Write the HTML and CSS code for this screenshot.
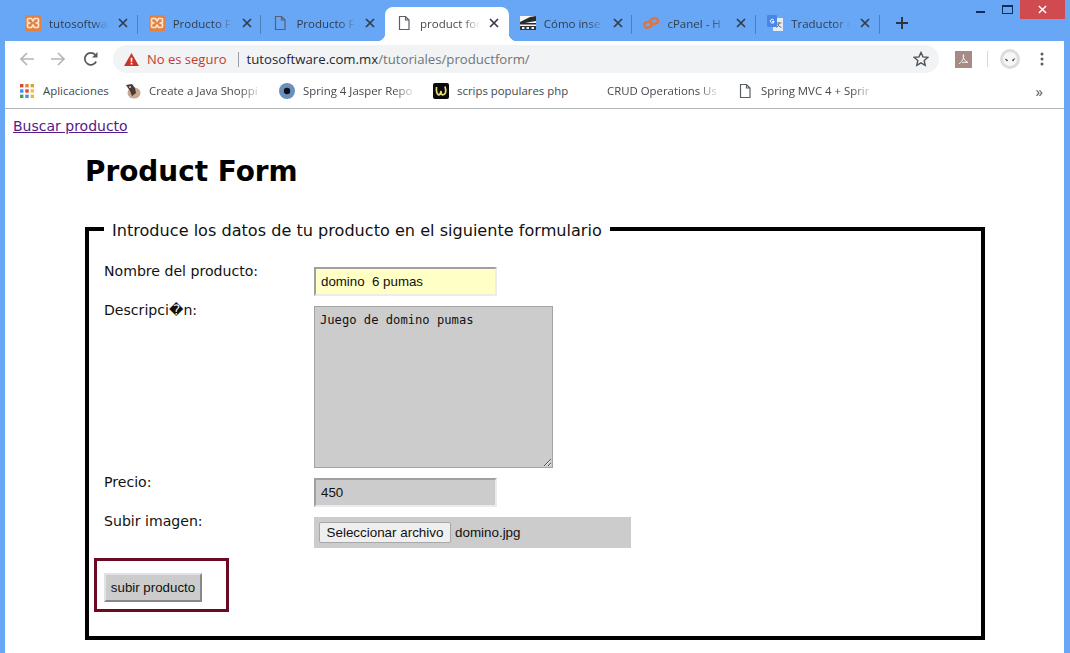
FILE: index.html
```html
<!DOCTYPE html>
<html lang="es">
<head>
<meta charset="utf-8">
<title>product form</title>
<link rel="stylesheet" href="styles.css">
</head>
<body>
<svg class="defs" width="0" height="0">
  <symbol id="xampp" viewBox="0 0 16 16">
    <rect width="16" height="16" rx="1.5" fill="#e5813f"/>
    <path d="M3.500 3.500h3L8 6l1.500-2.500h3q1 0 1 1V7L11.500 8l2 1v2.500q0 1-1 1h-3L8 10l-1.500 2.500h-3q-1 0-1-1V9l2-1-2-1V4.500q0-1 1-1z" fill="none" stroke="#fbe6d4" stroke-width="1.600"/>
  </symbol>
  <symbol id="doc" viewBox="0 0 16 16">
    <path d="M3.500 1.500h6l3.500 3.500v9.500h-9.500z M9.500 1.500v3.500h3.500" fill="none" stroke="#5a6068" stroke-width="1.200"/>
  </symbol>
  <symbol id="close" viewBox="0 0 10 10">
    <path d="M1 1l8 8M9 1l-8 8" stroke="#333c48" stroke-width="1.700" fill="none"/>
  </symbol>
</svg>

<header class="tabstrip">
  <div class="tab sep"><svg class="fav"><use href="#xampp"/></svg><span class="tab-title">tutosoftwar</span><svg class="x"><use href="#close"/></svg></div>
  <div class="tab sep"><svg class="fav"><use href="#xampp"/></svg><span class="tab-title">Producto F</span><svg class="x"><use href="#close"/></svg></div>
  <div class="tab"><svg class="fav"><use href="#doc"/></svg><span class="tab-title">Producto F</span><svg class="x"><use href="#close"/></svg></div>
  <div class="tab active"><svg class="fav"><use href="#doc"/></svg><span class="tab-title">product for</span><svg class="x"><use href="#close"/></svg></div>
  <div class="tab sep"><svg class="fav" viewBox="0 0 16 16"><rect y="1" width="16" height="14" fill="#f4f6f8"/><path d="M0 7l6-3 4-2 6-1v5l-6 1-10 2z" fill="#2a2a2a"/><rect y="8" width="16" height="1.500" fill="#2a2a2a"/><path d="M0 11h16v4H0z" fill="#333"/><path d="M2 12h2.500v2H2zM6.500 12H9v2H6.500zM11.500 12H14v2h-2.500z" fill="#eee"/></svg><span class="tab-title">Cómo inse</span><svg class="x"><use href="#close"/></svg></div>
  <div class="tab sep"><svg class="fav" viewBox="0 0 16 16"><g fill="none" stroke="#e4703c" stroke-width="2.400"><rect x="1.400" y="7" width="7.500" height="5.400" rx="2.700" transform="rotate(-18 5 10)"/><rect x="7.400" y="3.400" width="7.500" height="5.400" rx="2.700" transform="rotate(-18 11 6)"/></g></svg><span class="tab-title">cPanel - H</span><svg class="x"><use href="#close"/></svg></div>
  <div class="tab sep"><svg class="fav" viewBox="0 0 16 16"><rect x="6" y="3" width="10" height="13" fill="#e4ecf8"/><rect width="10" height="12" rx="1" fill="#4a86e8"/><path d="M6.800 5a1.900 1.900 0 1 0 .4 1.600H5" fill="none" stroke="#fff" stroke-width="1"/><path d="M9.500 8h5M12 7v1.500q0 3-3 4M10.500 9q1 2.500 4 3.500" fill="none" stroke="#667" stroke-width=".9"/></svg><span class="tab-title">Traductor c</span><svg class="x"><use href="#close"/></svg></div>
  <svg class="plus" viewBox="0 0 12 12"><path d="M6 0v12M0 6h12" stroke="#2c3440" stroke-width="1.900" fill="none"/></svg>
  <div class="winctl">
    <span class="win-min"></span>
    <span class="win-max"></span>
    <span class="win-close"><svg class="win-x" viewBox="0 0 10 10"><path d="M1 1l8 8M9 1l-8 8" stroke="#fff" stroke-width="1.600" fill="none"/></svg></span>
  </div>
</header>

<div class="window">
  <nav class="toolbar">
    <svg class="tool tool-back" viewBox="0 0 16 16"><path d="M15 8H2M8 2L2 8l6 6" fill="none" stroke="#b3b6ba" stroke-width="1.700"/></svg>
    <svg class="tool tool-fwd" viewBox="0 0 16 16"><path d="M1 8h13M8 2l6 6-6 6" fill="none" stroke="#b3b6ba" stroke-width="1.700"/></svg>
    <svg class="tool tool-reload" viewBox="0 0 16 16"><path d="M13.200 10.500A6 6 0 1 1 12.300 3.800" fill="none" stroke="#55595e" stroke-width="1.700"/><path d="M14.500 1v5.500H9z" fill="#55595e"/></svg>
    <div class="omnibox">
      <svg class="warn" viewBox="0 0 16 14"><path d="M8 0l8 14H0z" fill="#c9342a"/><path d="M7.100 5h1.800v4.500H7.100zM7.100 10.500h1.800v1.800H7.100z" fill="#fff"/></svg>
      <span class="insecure">No es seguro</span>
      <span class="omni-sep"></span>
      <span class="url">tutosoftware.com.mx<span class="url-path">/tutoriales/productform/</span></span>
      <svg class="star" viewBox="0 0 16 16"><path d="M8 1.500l2 4.400 4.800.5-3.600 3.200 1 4.700L8 11.900l-4.200 2.400 1-4.700L1.200 6.400 6 5.900z" fill="none" stroke="#4d5257" stroke-width="1.400"/></svg>
    </div>
    <svg class="ext-pdf" viewBox="0 0 17 17"><rect width="17" height="17" fill="#a58a86"/><path d="M4 13q3-2 4.500-6 .5-2.500 0-3.500-1 1 0 3.500 1 3 4.500 4.500-3-.5-6 0" fill="none" stroke="#f4ecea" stroke-width="1"/></svg>
    <span class="tool-sep"></span>
    <svg class="avatar" viewBox="0 0 20 20"><circle cx="10" cy="10" r="10" fill="#dcdcdc"/><circle cx="10" cy="10" r="7" fill="#f7f7f7"/><path d="M4.500 9.500l3.500 1.500-1 1.500zM15.500 9l-3.500 2 1 1.500z" fill="#333"/></svg>
    <svg class="dots" viewBox="0 0 4 14"><circle cx="2" cy="2" r="1.500" fill="#5a5e63"/><circle cx="2" cy="7" r="1.500" fill="#5a5e63"/><circle cx="2" cy="12" r="1.500" fill="#5a5e63"/></svg>
  </nav>

  <div class="bookmarks">
    <div class="bm bm-apps">
      <svg class="apps" viewBox="0 0 14 14">
        <rect x="0" y="0" width="3.400" height="3.400" fill="#d8483b"/><rect x="5.300" y="0" width="3.400" height="3.400" fill="#e0862e"/><rect x="10.600" y="0" width="3.400" height="3.400" fill="#d8a22b"/>
        <rect x="0" y="5.300" width="3.400" height="3.400" fill="#4c8bea"/><rect x="5.300" y="5.300" width="3.400" height="3.400" fill="#d8483b"/><rect x="10.600" y="5.300" width="3.400" height="3.400" fill="#f0c33c"/>
        <rect x="0" y="10.600" width="3.400" height="3.400" fill="#3e9e55"/><rect x="5.300" y="10.600" width="3.400" height="3.400" fill="#4c8bea"/><rect x="10.600" y="10.600" width="3.400" height="3.400" fill="#e6b93a"/>
      </svg>
      <span class="bm-text">Aplicaciones</span>
    </div>
    <div class="bm bm-java">
      <svg class="bm-ico" viewBox="0 0 16 16"><ellipse cx="9" cy="10" rx="6.500" ry="5.500" fill="#c8a890"/><path d="M1 2l6-1 3 4 1 5-4 3-2-5z" fill="#4a3a34"/><circle cx="5" cy="4" r="1" fill="#ddd"/></svg>
      <span class="bm-text bm-fade">Create a Java Shoppi</span>
    </div>
    <div class="bm bm-spring">
      <svg class="bm-ico" viewBox="0 0 16 16"><circle cx="8" cy="8" r="8" fill="#6b8fbc"/><circle cx="8" cy="8" r="3.200" fill="#0c1018"/></svg>
      <span class="bm-text bm-fade">Spring 4 Jasper Repo</span>
    </div>
    <div class="bm bm-scrips">
      <svg class="bm-ico" viewBox="0 0 16 16"><rect width="16" height="16" rx="2" fill="#0a0a0a"/><path d="M3.500 4q-.5 6 1.500 7.500T8 8q0 5 3 3.500t1-8" fill="none" stroke="#e6dc7c" stroke-width="1.700"/></svg>
      <span class="bm-text">scrips populares php</span>
    </div>
    <div class="bm bm-crud"><span class="bm-text bm-fade">CRUD Operations Us</span></div>
    <div class="bm bm-mvc">
      <svg class="bm-ico" viewBox="0 0 16 16"><use href="#doc"/></svg>
      <span class="bm-text bm-fade">Spring MVC 4 + Sprir</span>
    </div>
    <span class="more">»</span>
  </div>

  <main class="page">
    <a class="back-link" href="#">Buscar producto</a>
    <div class="content">
      <h1 class="title">Product Form</h1>
      <form>
        <fieldset class="box">
          <legend class="box-legend">Introduce los datos de tu producto en el siguiente formulario</legend>
          <div class="row">
            <label class="lbl">Nombre del producto:</label>
            <input class="field field-active" type="text" value="domino  6 pumas">
          </div>
          <div class="row">
            <label class="lbl">Descripci�n:</label>
            <textarea class="area">Juego de domino pumas</textarea>
          </div>
          <div class="row">
            <label class="lbl">Precio:</label>
            <input class="field" type="text" value="450">
          </div>
          <div class="row">
            <label class="lbl">Subir imagen:</label>
            <div class="file"><button class="file-btn" type="button">Seleccionar archivo</button><span class="file-name">domino.jpg</span></div>
          </div>
          <div class="submit-box"><button class="submit" type="button">subir producto</button></div>
        </fieldset>
      </form>
    </div>
  </main>
</div>
</body>
</html>
```

FILE: styles.css
```css
* { box-sizing: border-box; }
html, body { margin: 0; height: 100%; overflow: hidden; }
body { background: #68a7f5; font-family: "Open Sans", sans-serif; display: flex; flex-direction: column; }
.defs { position: absolute; }

/* tab strip */
.tabstrip { height: 41px; display: flex; padding-left: 14px; flex: none; }
.tab { width: 123.7px; height: 34px; margin-top: 7px; padding-left: 11px; display: flex; align-items: center; position: relative; font-size: 11.500px; color: #2f3d50; border-radius: 8px 8px 0 0; flex: none; }
.tab.sep::after { content: ""; position: absolute; right: 0; top: 8px; height: 19px; width: 1px; background: #4c7fbe; }
.tab.active { background: #fff; color: #44484e; }
.tab.active::before, .tab.active::after { content: ""; position: absolute; bottom: 0; width: 8px; height: 8px; }
.tab.active::before { left: -8px; background: radial-gradient(circle at 0 0, transparent 8px, #fff 8.500px); }
.tab.active::after { right: -8px; background: radial-gradient(circle at 100% 0, transparent 8px, #fff 8.500px); }
.fav { width: 16px; height: 16px; flex: none; margin-top: -2px; }
.tab-title { width: 60px; margin-left: 8px; white-space: nowrap; margin-top: -2px; -webkit-mask-image: linear-gradient(to right, #000 72%, transparent 100%); mask-image: linear-gradient(to right, #000 72%, transparent 100%); }
.x { width: 10px; height: 10px; margin-left: 9px; flex: none; margin-top: -2px; }
.plus { width: 12px; height: 12px; margin: 17px 0 0 16px; flex: none; }
.winctl { margin-left: auto; display: flex; height: 19px; flex: none; margin-right: 5px; }
.win-min { width: 9px; height: 2px; background: #0f2f55; margin: 11px 0 0 0; }
.win-max { width: 11px; height: 9px; border: 1px solid #0f2f55; border-top-width: 2px; margin: 5px 7px 0 17px; }
.win-close { width: 45px; height: 19px; background: #d04b50; display: flex; align-items: center; justify-content: center; }
.win-x { width: 9px; height: 9px; }

/* window */
.window { flex: 1; min-height: 0; margin: 0 6px 0 5px; background: #fff; display: flex; flex-direction: column; }
.toolbar { height: 36px; display: flex; align-items: center; flex: none; }
.tool { width: 16px; height: 16px; flex: none; }
.tool-back { margin-left: 14px; }
.tool-fwd { margin-left: 15px; }
.tool-reload { margin-left: 17px; }
.omnibox { width: 826px; height: 28px; margin-left: 14px; background: #f1f3f4; border-radius: 14px; display: flex; align-items: center; padding-left: 11px; font-size: 13px; flex: none; }
.warn { width: 15px; height: 13px; flex: none; }
.insecure { color: #c5392f; margin-left: 8px; white-space: nowrap; }
.omni-sep { width: 1px; height: 15px; background: #9a9ea3; margin: 0 8px 0 11px; }
.url { color: #24282d; white-space: nowrap; font-size: 13.200px; }
.url-path { color: #70757a; }
.star { width: 16px; height: 16px; margin-left: auto; margin-right: 10px; flex: none; }
.ext-pdf { width: 17px; height: 17px; margin-left: 16px; flex: none; }
.tool-sep { width: 1px; height: 16px; background: #d5d7da; margin-left: 15px; }
.avatar { width: 20px; height: 20px; margin-left: 12px; flex: none; }
.dots { width: 4px; height: 14px; margin-left: 20px; flex: none; }

/* bookmarks */
.bookmarks { height: 32px; border-bottom: 1px solid #b4b6b8; display: flex; align-items: center; font-size: 11.400px; color: #44484d; flex: none; padding-bottom: 3px; }
.bm { display: flex; align-items: center; white-space: nowrap; flex: none; }
.bm-text { margin-top: -2px; }
.apps { width: 14px; height: 14px; margin-right: 9px; flex: none; }
.bm-ico { width: 16px; height: 16px; margin-right: 8px; flex: none; }
.bm-apps { margin-left: 15px; width: 105px; }
.bm-java { width: 154px; }
.bm-spring { width: 154px; }
.bm-scrips { width: 174px; }
.bm-crud { width: 130px; }
.bm-fade { width: 114px; -webkit-mask-image: linear-gradient(to right, #000 80%, transparent 100%); mask-image: linear-gradient(to right, #000 80%, transparent 100%); }
.more { margin-left: auto; margin-right: 21px; font-size: 15px; line-height: 1; color: #55595e; }

/* page */
.page { flex: 1; min-height: 0; overflow: hidden; padding: 8px 8px 0; font-family: "DejaVu Sans", sans-serif; color: #000; }
.back-link { color: #551a8b; font-size: 14px; line-height: 18px; display: block; }
.content { margin: 0 71px 0 72px; }
.title { font-size: 27.900px; font-weight: bold; line-height: 34px; margin: 20px 0 0; }
.box { border: 4px solid #000; margin: 28px 0 0; padding: 27px 15px 24px; min-width: 0; }
.box-legend { font-size: 16.100px; line-height: 19px; padding: 4px 8px 0; color: #111; }
.row { display: flex; align-items: flex-start; margin-bottom: 10px; }
.lbl { width: 210px; flex: none; font-size: 14.100px; line-height: 17px; margin-top: -4px; color: #111; }
.field { width: 183px; height: 29px; padding: 1px 5px; border: 2px solid; border-color: #a0a0a0 #ececec #ececec #a0a0a0; background: #ccc; font: 13.300px "Liberation Sans", sans-serif; color: #111; margin: 0; outline: none; }
.field-active { background: #ffffc6; }
.area { width: 239px; height: 162px; padding: 6px 5px; border: 1px solid #a4a4a4; background: #ccc; font: 12.150px/14px "DejaVu Sans Mono", monospace; color: #111; margin: 0; display: block; }
.file { width: 317px; height: 31px; background: #ccc; display: flex; align-items: center; padding-left: 5px; font: 13.400px "Liberation Sans", sans-serif; color: #111; }
.file-btn { height: 21px; width: 132px; padding: 0; border: 1px solid #a8a8a8; border-radius: 2px; background: #efefef; font: 13.400px "Liberation Sans", sans-serif; color: #111; }
.file-name { margin-left: 4px; }
.submit-box { width: 135px; height: 54px; margin: 0 0 0 -10px; border: 3px solid #6b0a22; padding: 12px 0 0 7px; }
.submit { width: 98px; height: 29px; padding: 0; border: 2px solid; border-color: #e2e2e2 #888 #888 #e2e2e2; background: #ccc; font: 13.300px "Liberation Sans", sans-serif; color: #111; display: block; }
```
